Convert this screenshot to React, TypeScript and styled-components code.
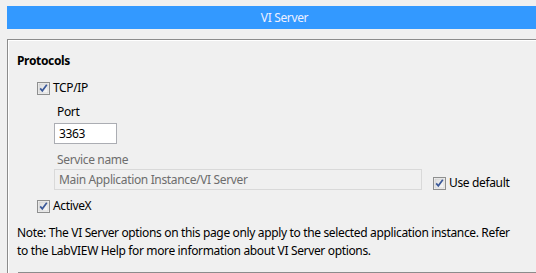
import { createGlobalStyle, styled } from "styled-components";

const GlobalStyle = createGlobalStyle`
  html, body {
    margin: 0;
    padding: 0;
    background: #f0f0f0;
    overflow: hidden;
  }
  body {
    font-family: "Noto Sans", "Open Sans", sans-serif;
    font-size: 12px;
    line-height: 16px;
    letter-spacing: -0.35px;
    color: #000;
  }
`;

const Page = styled.div`
  width: 560px;
  height: 273px;
  overflow: hidden;
  padding: 6px 0 0 7px;
  box-sizing: border-box;
`;

const TitleBar = styled.div`
  height: 23px;
  background: #3399ff;
  color: #eef0ff;
  display: flex;
  align-items: center;
  justify-content: center;
  padding-left: 2px;
`;

const Group = styled.div`
  margin-top: 10px;
  border: 1px solid #8c8c8c;
  border-right: none;
  border-bottom: none;
  box-shadow: inset 1px 1px 0 #ffffff;
  padding: 13px 0 0 9px;
  height: 240px;
`;

const Heading = styled.div`
  font-weight: 700;
`;

const CheckRow = styled.label<{ $top: number }>`
  display: flex;
  align-items: center;
  height: 16px;
  margin: ${({ $top }) => $top}px 0 0 20px;
  gap: 3px;
`;

const Indented = styled.div`
  margin-left: 37px;
`;

const FieldLabel = styled.div<{ $disabled?: boolean; $top: number }>`
  margin: ${({ $top }) => $top}px 0 0 3px;
  color: ${({ $disabled }) => ($disabled ? "#6d6d6d" : "#000")};
`;

const TextBox = styled.div<{ $width: number; $disabled?: boolean }>`
  box-sizing: border-box;
  width: ${({ $width }) => $width}px;
  height: 21px;
  display: flex;
  align-items: center;
  padding-left: 4px;
  border: 1px solid ${({ $disabled }) => ($disabled ? "#d9d9d9" : "#abadb3")};
  background: ${({ $disabled }) => ($disabled ? "#f0f0f0" : "#fff")};
  color: ${({ $disabled }) => ($disabled ? "#6d6d6d" : "#000")};
`;

const ServiceRow = styled.div`
  display: flex;
  align-items: flex-end;
  margin-top: 1px;
`;

const DefaultCheck = styled.label`
  display: flex;
  align-items: center;
  height: 16px;
  gap: 3px;
  margin: 0 0 -1px 11px;
`;

const Note = styled.p`
  margin: 10px 0 0;
  line-height: 18px;
  white-space: nowrap;
`;

const Divider = styled.div`
  margin: 12px 0 0 1px;
  border-top: 1px solid #8c8c8c;
`;

function CheckBox() {
  return (
    <svg width="13" height="13" viewBox="0 0 13 13">
      <defs>
        <linearGradient id="cbg" x1="0" y1="0" x2="1" y2="1">
          <stop offset="0" stopColor="#dcdcdc" />
          <stop offset="1" stopColor="#fbfbfb" />
        </linearGradient>
      </defs>
      <rect x="0.5" y="0.5" width="12" height="12" fill="#f4f4f4" stroke="#8e8f8f" />
      <rect x="2" y="2" width="9" height="9" fill="url(#cbg)" stroke="#c8c8c8" strokeWidth="0.6" />
      <path d="M3.2 6.4 L5.3 8.8 L9.8 2.8" fill="none" stroke="#3b5999" strokeWidth="1.7" />
    </svg>
  );
}

export default function App() {
  return (
    <>
      <GlobalStyle />
      <Page>
        <TitleBar>VI Server</TitleBar>
        <Group>
          <Heading>Protocols</Heading>
          <CheckRow $top={11}>
            <CheckBox />
            TCP/IP
          </CheckRow>
          <Indented>
            <FieldLabel $top={8}>Port</FieldLabel>
            <TextBox $width={63} style={{ marginTop: 3 }}>
              3363
            </TextBox>
            <FieldLabel $top={8} $disabled>
              Service name
            </FieldLabel>
            <ServiceRow>
              <TextBox $width={368} $disabled>
                Main Application Instance/VI Server
              </TextBox>
              <DefaultCheck>
                <CheckBox />
                Use default
              </DefaultCheck>
            </ServiceRow>
          </Indented>
          <CheckRow $top={8}>
            <CheckBox />
            ActiveX
          </CheckRow>
          <Note>
            Note: The VI Server options on this page only apply to the selected application instance. Refer
            <br />
            to the LabVIEW Help for more information about VI Server options.
          </Note>
          <Divider />
        </Group>
      </Page>
    </>
  );
}
